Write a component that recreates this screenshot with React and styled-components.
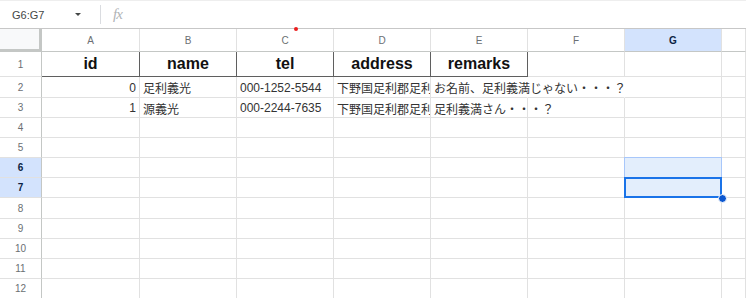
import React from "react";
import styled, { createGlobalStyle, css } from "styled-components";

const GlobalStyle = createGlobalStyle`
  html, body { margin: 0; padding: 0; background: #fff; }
  body {
    font-family: "Liberation Sans", Arial, "Noto Sans CJK JP", sans-serif;
    overflow: hidden;
  }
`;

const Page = styled.div`
  width: 746px;
  height: 298px;
  overflow: hidden;
  background: #fff;
`;

const FormulaBar = styled.div`
  height: 29px;
  box-sizing: border-box;
  display: flex;
  align-items: center;
  border-top: 1px solid #eeeeee;
  border-bottom: 1px solid #c7c7c7;
`;

const NameBox = styled.div`
  width: 88px;
  box-sizing: border-box;
  padding-left: 12px;
  display: flex;
  align-items: center;
  justify-content: space-between;
  padding-right: 7px;
  font-size: 11px;
  color: #444746;
`;

const Caret = styled.span`
  width: 0;
  height: 0;
  border-left: 3.5px solid transparent;
  border-right: 3.5px solid transparent;
  border-top: 3.5px solid #444746;
`;

const Divider = styled.div`
  width: 1px;
  height: 19px;
  background: #dadce0;
  margin-left: 12px;
`;

const Fx = styled.span`
  margin-left: 12px;
  font-family: "Liberation Serif", "DejaVu Serif", serif;
  font-style: italic;
  font-size: 15px;
  color: #b0b3b6;
  letter-spacing: -1px;
`;

const GridWrap = styled.div`
  position: relative;
`;

const Grid = styled.div`
  display: grid;
  grid-template-columns: 42px 98px repeat(6, 97px) 1fr;
  grid-template-rows: 23px ${(p) => p.$rows};
`;

const Corner = styled.div`
  box-sizing: border-box;
  background: #f8f9fa;
  border-right: 1px solid #c4c7c5;
  border-bottom: 1px solid #c4c7c5;
  box-shadow: inset -2px -2px 0 #c4c7c5;
`;

const ColHead = styled.div`
  box-sizing: border-box;
  display: flex;
  align-items: center;
  justify-content: center;
  font-size: 10px;
  color: #6b6f73;
  border-right: 1px solid #e1e1e1;
  border-bottom: 1px solid #c4c7c5;
  background: #fff;
  ${(p) =>
    p.$sel &&
    css`
      background: #d3e3fd;
      color: #0b1f44;
      font-weight: bold;
    `}
`;

const RowHead = styled.div`
  box-sizing: border-box;
  display: flex;
  align-items: center;
  justify-content: center;
  font-size: 10px;
  color: #6b6f73;
  border-right: 1px solid #c4c7c5;
  border-bottom: 1px solid #e1e1e1;
  background: #fff;
  ${(p) =>
    p.$sel &&
    css`
      background: #d3e3fd;
      color: #0b1f44;
      font-weight: bold;
    `}
`;

const Cell = styled.div`
  box-sizing: border-box;
  position: relative;
  display: flex;
  align-items: center;
  padding: 1px 3px 0;
  font-size: 12px;
  color: #333;
  white-space: nowrap;
  min-width: 0;
  overflow: ${(p) => (p.$clip ? "hidden" : "visible")};
  justify-content: ${(p) => (p.$align === "right" ? "flex-end" : "flex-start")};
  border-right: 1px solid ${(p) => (p.$spill ? "transparent" : "#e1e1e1")};
  border-bottom: 1px solid #e1e1e1;
  z-index: ${(p) => (p.$spillSrc ? 2 : 1)};
  ${(p) =>
    p.$title &&
    css`
      justify-content: center;
      font-size: 16px;
      font-weight: bold;
      color: #111;
      padding-top: 0;
      border-right: 1px solid #5f5f5f;
      border-bottom: 1px solid #5f5f5f;
    `}
`;

const Selection = styled.div`
  position: absolute;
  left: 624px;
  top: 128px;
  width: 98px;
  height: 41px;
  box-sizing: border-box;
  background: rgba(26, 115, 232, 0.12);
  border: 1px solid #a8c7fa;
  z-index: 3;
  pointer-events: none;
`;

const ActiveCell = styled.div`
  position: absolute;
  left: 624px;
  top: 148px;
  width: 98px;
  height: 21px;
  box-sizing: border-box;
  border: 2px solid #1a73e8;
  z-index: 4;
  pointer-events: none;
`;

const FillHandle = styled.div`
  position: absolute;
  left: 718px;
  top: 165px;
  width: 7px;
  height: 7px;
  border-radius: 50%;
  background: #0b57d0;
  border: 1px solid #fff;
  z-index: 5;
`;

const PresenceDot = styled.div`
  position: absolute;
  left: 294px;
  top: -2px;
  width: 4px;
  height: 4px;
  border-radius: 50%;
  background: #ea1e1e;
  z-index: 5;
`;

const COLS = ["A", "B", "C", "D", "E", "F", "G", ""];
const ROW_HEIGHTS = [25, 21, 20, 20, 20, 20, 20, 21, 20, 20, 20, 20];
const SELECTED_ROWS = [6, 7];

const DATA = {
  1: [
    { v: "id", title: true },
    { v: "name", title: true },
    { v: "tel", title: true },
    { v: "address", title: true },
    { v: "remarks", title: true },
  ],
  2: [
    { v: "0", align: "right" },
    { v: "足利義光" },
    { v: "000-1252-5544" },
    { v: "下野国足利郡足利荘", clip: true },
    { v: "お名前、足利義満じゃない・・・？", spill: true, spillSrc: true },
    { v: "", spill: true },
  ],
  3: [
    { v: "1", align: "right" },
    { v: "源義光" },
    { v: "000-2244-7635" },
    { v: "下野国足利郡足利荘", clip: true },
    { v: "足利義満さん・・・？" },
  ],
};

export default function App() {
  return (
    <>
      <GlobalStyle />
      <Page>
        <FormulaBar>
          <NameBox>
            <span>G6:G7</span>
            <Caret />
          </NameBox>
          <Divider />
          <Fx>fx</Fx>
        </FormulaBar>
        <GridWrap>
          <Grid $rows={ROW_HEIGHTS.map((h) => `${h}px`).join(" ")}>
            <Corner />
            {COLS.map((c, i) => (
              <ColHead key={`h${i}`} $sel={c === "G"}>
                {c}
              </ColHead>
            ))}
            {ROW_HEIGHTS.map((_, ri) => {
              const r = ri + 1;
              const cells = DATA[r] || [];
              return (
                <React.Fragment key={r}>
                  <RowHead $sel={SELECTED_ROWS.includes(r)}>{r}</RowHead>
                  {COLS.map((_, ci) => {
                    const d = cells[ci] || {};
                    return (
                      <Cell
                        key={ci}
                        $title={d.title}
                        $align={d.align}
                        $clip={d.clip}
                        $spill={d.spill}
                        $spillSrc={d.spillSrc}
                      >
                        {d.v}
                      </Cell>
                    );
                  })}
                </React.Fragment>
              );
            })}
          </Grid>
          <PresenceDot />
          <Selection />
          <ActiveCell />
          <FillHandle />
        </GridWrap>
      </Page>
    </>
  );
}
